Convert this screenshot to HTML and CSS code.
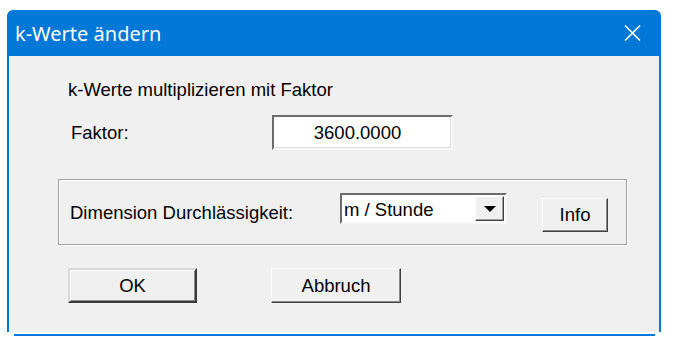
FILE: index.html
```html
<!DOCTYPE html>
<html lang="de">
<head>
  <meta charset="UTF-8">
  <meta name="viewport" content="width=device-width, initial-scale=1.0">
  <title>k-Werte ändern</title>
  <link rel="stylesheet" href="styles.css">
</head>
<body>
  <div class="window">
    <div class="titlebar">
      <span class="title">k-Werte ändern</span>
      <svg class="close" width="17" height="16" viewBox="0 0 17 16">
        <path d="M1 0.5 L16 15.5 M16 0.5 L1 15.5" stroke="#fff" stroke-width="1.6" fill="none"/>
      </svg>
    </div>

    <div class="client">
      <p class="intro">k-Werte multiplizieren mit Faktor</p>

      <div class="factor-row">
        <span class="label">Faktor:</span>
        <div class="field">3600.0000</div>
      </div>

      <div class="group">
        <span class="label dim-label">Dimension Durchlässigkeit:</span>
        <div class="combo">
          <span class="combo-text">m / Stunde</span>
          <span class="combo-btn"><span class="arrow"></span></span>
        </div>
        <button class="btn info-btn">Info</button>
      </div>

      <div class="actions">
        <button class="btn btn-default">OK</button>
        <button class="btn btn-cancel">Abbruch</button>
      </div>
    </div>
  </div>
  <div class="window-bottom"></div>
</body>
</html>
```

FILE: styles.css
```css
body {
  margin: 0;
  padding: 10px 0 0 7px;
  background-color: #fff;
  font-family: "Liberation Sans", Arial, sans-serif;
  font-size: 18.5px;
  color: #000;
}

.window {
  width: 650px;
  border: 2px solid #0078d7;
  border-bottom: none;
  border-radius: 6px 6px 0 0;
  background-color: #0078d7;
}

.titlebar {
  height: 44px;
  display: flex;
  align-items: center;
  justify-content: space-between;
  padding: 0 18px 0 6px;
  color: #fff;
}

.title {
  font-family: "Noto Sans", "Open Sans", sans-serif;
  font-size: 20px;
  margin-top: -2px;
}

.close {
  margin-top: -2px;
}

.client {
  background-color: #f0f0f0;
  padding: 23px 0 29px 59px;
}

.intro {
  margin: 0;
  line-height: 22px;
}

.label {
  line-height: 22px;
}

.factor-row {
  display: flex;
  align-items: center;
  margin-top: 14px;
  height: 35px;
}

.factor-row .label {
  margin-left: 3px;
  width: 201px;
}

.field {
  box-sizing: border-box;
  width: 181px;
  height: 35px;
  background-color: #fff;
  border: 2px solid;
  border-color: #6d6d6d #f7f7f7 #f7f7f7 #6d6d6d;
  box-shadow: inset -1px -1px 0 #e0e0e0;
  text-align: center;
  line-height: 31px;
  padding-right: 10px;
}

.group {
  box-sizing: border-box;
  width: 569px;
  height: 66px;
  margin: 29px 0 0 -10px;
  border: 1px solid #a0a0a0;
  box-shadow: inset 1px 1px 0 #fff, 1px 1px 0 #fff;
  display: flex;
  align-items: flex-start;
  padding-left: 11px;
}

.dim-label {
  margin-top: 22px;
  width: 270px;
}

.combo {
  box-sizing: border-box;
  width: 167px;
  height: 31px;
  margin-top: 13px;
  background-color: #fff;
  border: 2px solid;
  border-color: #6d6d6d #f7f7f7 #f7f7f7 #6d6d6d;
  display: flex;
  align-items: center;
  justify-content: space-between;
  padding: 0 1px 0 2px;
}

.combo-text {
  line-height: 22px;
  margin-top: 2px;
}

.combo-btn {
  box-sizing: border-box;
  width: 29px;
  height: 25px;
  background-color: #f0f0f0;
  border: 1px solid;
  border-color: #fff #404040 #404040 #fff;
  box-shadow: inset -1px -1px 0 #a0a0a0;
  display: flex;
  align-items: center;
  justify-content: center;
}

.arrow {
  width: 0;
  height: 0;
  border-left: 6px solid transparent;
  border-right: 6px solid transparent;
  border-top: 6px solid #000;
}

.btn {
  box-sizing: border-box;
  font-family: "Liberation Sans", Arial, sans-serif;
  font-size: 18.5px;
  color: #000;
  background-color: #f0f0f0;
  border: 1px solid;
  border-color: #fff #404040 #404040 #fff;
  box-shadow: inset -1px -1px 0 #8a8a8a;
  padding: 0;
}

.info-btn {
  width: 66px;
  height: 34px;
  margin-left: 35px;
  margin-top: 18px;
}

.actions {
  display: flex;
  gap: 74px;
  margin-top: 23px;
}

.btn-default,
.btn-cancel {
  width: 129px;
  height: 35px;
}

.btn-default {
  border: 2px solid;
  border-color: #d8d8d8 #3a3a3a #3a3a3a #d8d8d8;
  box-shadow: inset 1px 1px 0 #fff, inset -1px -1px 0 #8a8a8a;
}

.btn-cancel {
  width: 130px;
}

.window-bottom {
  width: 641px;
  height: 2px;
  margin: 2px 0 0 7px;
  background-color: #0078d7;
}
```
